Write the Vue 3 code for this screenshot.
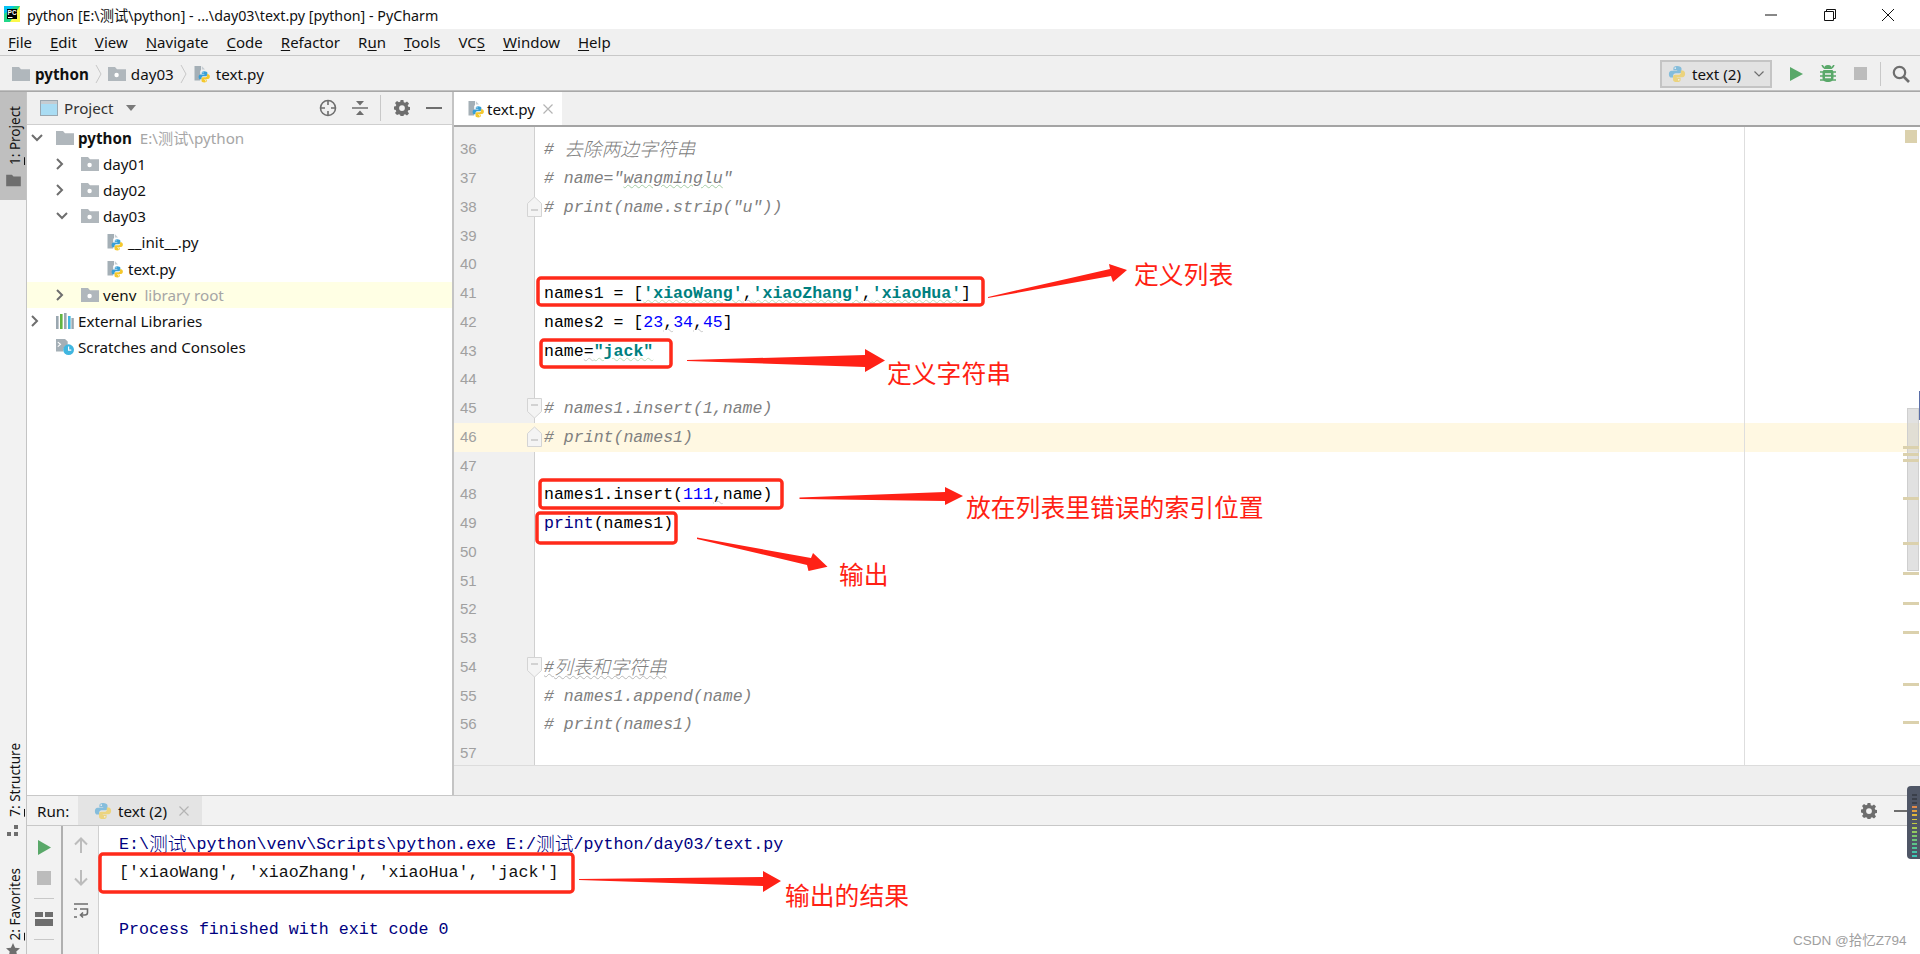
<script setup>
const menu = [['', 'F', 'ile'], ['', 'E', 'dit'], ['', 'V', 'iew'], ['', 'N', 'avigate'], ['', 'C', 'ode'], ['', 'R', 'efactor'], ['R', 'u', 'n'], ['', 'T', 'ools'], ['VC', 'S', ''], ['', 'W', 'indow'], ['', 'H', 'elp']]

const tree = [
  { d: 0, arrow: 'down', icon: 'folder', name: 'python', bold: true, muted: 'E:\\测试\\python' },
  { d: 1, arrow: 'right', icon: 'module', name: 'day01' },
  { d: 1, arrow: 'right', icon: 'module', name: 'day02' },
  { d: 1, arrow: 'down', icon: 'module', name: 'day03' },
  { d: 2, icon: 'filepy', name: '__init__.py' },
  { d: 2, icon: 'filepy', name: 'text.py' },
  { d: 1, arrow: 'right', icon: 'module', name: 'venv', muted: 'library root', hl: true },
  { d: 0, arrow: 'right', icon: 'libs', name: 'External Libraries' },
  { d: 0, icon: 'scratch', name: 'Scratches and Consoles' },
]

const g = (t) => ({ t, c: 'cm' })
const z = (t) => ({ t, c: 'cm zh' })
const s = (t) => ({ t, c: 'str' })
const p = (t) => ({ t })
const q = (t) => ({ t, c: 'sq' })
const b = (t) => ({ t, c: 'num' })
const lines = [
  { n: 36, seg: [g('# '), z('去除两边字符串')] },
  { n: 37, seg: [g('# name="'), { t: 'wangminglu', c: 'cm gw' }, g('"')] },
  { n: 38, fold: 'end', seg: [g('# print(name.strip("u"))')] },
  { n: 39, seg: [] },
  { n: 40, seg: [] },
  { n: 41, seg: [p('names1 = ['), s("'xiaoWang'"), q(','), s("'xiaoZhang'"), q(','), s("'xiaoHua'"), p(']')] },
  { n: 42, seg: [p('names2 = ['), b('23'), q(','), b('34'), q(','), b('45'), p(']')] },
  { n: 43, seg: [p('name'), q('='), s('"jack"')] },
  { n: 44, seg: [] },
  { n: 45, fold: 'start', seg: [g('# names1.insert(1,name)')] },
  { n: 46, fold: 'end', hl: true, seg: [g('# print(names1)')] },
  { n: 47, seg: [] },
  { n: 48, seg: [p('names1.insert('), b('111'), q(','), p('name)')] },
  { n: 49, seg: [{ t: 'print', c: 'kw' }, p('(names1)')] },
  { n: 50, seg: [] },
  { n: 51, seg: [] },
  { n: 52, seg: [] },
  { n: 53, seg: [] },
  { n: 54, fold: 'start', seg: [{ t: '#', c: 'cm wg' }, { t: '列表和字符串', c: 'cm zh wg' }] },
  { n: 55, seg: [g('# names1.append(name)')] },
  { n: 56, seg: [g('# print(names1)')] },
  { n: 57, seg: [] },
]

const markers = [130, 446, 453, 459, 497, 542, 572, 602, 631, 683, 721]

const boxes = [
  { x: 538, y: 278, w: 445, h: 27 },
  { x: 541, y: 340, w: 130, h: 27 },
  { x: 540, y: 480, w: 242, h: 28 },
  { x: 537, y: 513, w: 139, h: 30 },
  { x: 100, y: 854, w: 473, h: 38 },
]
const arrows = [
  '988,297 1110,269 1109,264 1127,270 1113,282 1111,276 988,298',
  '687,360 865,355 865,349 885,360.5 865,372 865,367 687,361',
  '799.5,497.5 945,492 945,487 963,496 945,505 945,501 799.5,499',
  '697,537.5 811,558 813,553 827.5,566.7 808.5,571 807,565 697,539',
  '579,879 763,877 763,871 781,881 763,892 763,886 579,880',
]
const meter = ['#3a3f4a', '#3a3f4a', '#3a3f4a', '#e08a4a', '#e0a040', '#dfb73c', '#d8c83a', '#c4cc42', '#aacb50', '#92c860', '#7cc66c', '#6cc47a', '#5cc488', '#50c498', '#46c4a8', '#3cc8b8']
</script>

<template>
  <div class="app">
    <svg class="defs" width="0" height="0">
      <defs>
        <symbol id="py" viewBox="0 0 16 16">
          <path fill="#389fd6" d="M8 .8C5.6.8 4.8 1.8 4.8 3v1.6H8.2v.6H3.2C1.7 5.2.8 6.4.8 8.2s.9 3 2.3 3h1.5V9.4c0-1.2 1-2.1 2.2-2.1h3.4c1 0 1.8-.8 1.8-1.8V3C11.9 1.8 10.4.8 8 .8z" />
          <path fill="#f4c82d" d="M8 15.2c2.4 0 3.2-1 3.2-2.2v-1.6H7.8v-.6h5c1.5 0 2.4-1.2 2.4-3s-.9-3-2.3-3h-1.5v1.8c0 1.2-1 2.1-2.2 2.1H6.3c-1 0-1.8.8-1.8 1.8V13c0 1.2 1.1 2.2 3.5 2.2z" />
          <circle cx="6.4" cy="2.8" r=".7" fill="#fff" />
          <circle cx="9.6" cy="13.2" r=".7" fill="#fff" />
        </symbol>
        <symbol id="filepy" viewBox="0 0 18 18">
          <path fill="#a4afb6" d="M1.5 1H8v4.5h-.8v10H1.5z" />
          <path fill="#c5ccd1" d="M8.8 1 12 4.6H8.8z" />
          <use href="#py" x="5" y="5.5" width="12.5" height="12.5" />
        </symbol>
        <symbol id="folder" viewBox="0 0 18 16">
          <path fill="#b0b7bc" d="M0 1h7l2 2.2h9V15H0z" />
        </symbol>
        <symbol id="module" viewBox="0 0 18 16">
          <path fill="#b0b7bc" d="M0 1h7l2 2.2h9V15H0z" />
          <circle cx="8.6" cy="9" r="2.2" fill="#fff" />
        </symbol>
        <symbol id="libs" viewBox="0 0 18 16">
          <rect x="0" y="3" width="2.6" height="13" fill="#9aa7b0" />
          <rect x="4" y="1" width="2.6" height="15" fill="#62b543" />
          <rect x="8" y="0" width="2.6" height="16" fill="#9aa7b0" />
          <rect x="12" y="3" width="2.6" height="13" fill="#40b6e0" />
          <rect x="15.4" y="5" width="2.4" height="11" fill="#9aa7b0" />
        </symbol>
        <symbol id="scratch" viewBox="0 0 20 18">
          <path fill="#a4afb6" d="M0 0h10l3 3v4a6 6 0 0 0-5 7H0z" />
          <path fill="none" stroke="#fff" stroke-width="1.2" d="M2 3.5 5 6 2 8.5" />
          <circle cx="14" cy="12" r="6" fill="#40b6e0" />
          <path fill="none" stroke="#fff" stroke-width="1.3" d="M14 8.5V12.4h3" />
        </symbol>
        <symbol id="gear" viewBox="0 0 16 16">
          <path fill="#6e6e6e" fill-rule="evenodd" d="M6.6 0h2.8l.4 2.2 1.3.6L13 1.5l2 2-1.3 1.9.6 1.3 2.2.4v2.8l-2.2.4-.6 1.3 1.3 1.9-2 2-1.9-1.3-1.3.6-.4 2.2H6.6l-.4-2.2-1.3-.6L3 15.1l-2-2 1.3-1.9-.6-1.3L-.5 9.5V6.7l2.2-.4.6-1.3L1 3l2-2 1.9 1.3 1.3-.6zM8 5.2a2.9 2.9 0 1 0 0 5.8 2.9 2.9 0 0 0 0-5.8z" />
        </symbol>
      </defs>
    </svg>

    <header class="title">
      <svg class="pc" width="16" height="16" viewBox="0 0 16 16">
        <rect width="16" height="16" fill="#21d789" />
        <path fill="#fcf84a" d="M16 0v16H6z" />
        <path fill="#07c3f2" d="M0 0h11L0 8z" />
        <rect x="3" y="3" width="10" height="10" fill="#000" />
        <rect x="4" y="11" width="4.5" height="1" fill="#fff" />
        <text x="3.6" y="9" class="pctext">PC</text>
      </svg>
      <span class="title-text">python [E:\测试\python] - ...\day03\text.py [python] - PyCharm</span>
      <div class="winctl">
        <svg width="14" height="14" viewBox="0 0 14 14"><path d="M0 7h12" stroke="#111" stroke-width="1" /></svg>
        <svg width="14" height="14" viewBox="0 0 14 14"><path d="M1.5 3.5h9v9h-9zM3.5 3.5v-2h9v9h-2" fill="none" stroke="#111" /></svg>
        <svg width="14" height="14" viewBox="0 0 14 14"><path d="M1 1l12 12M13 1 1 13" stroke="#111" stroke-width="1" /></svg>
      </div>
    </header>

    <nav class="menu">
      <span v-for="m in menu" :key="m[0] + m[1]">{{ m[0] }}<u>{{ m[1] }}</u>{{ m[2] }}</span>
    </nav>

    <div class="nav">
      <svg width="18" height="16"><use href="#folder" /></svg>
      <b class="crumb-b">python</b>
      <svg class="sep" width="7" height="20" viewBox="0 0 7 20"><path d="M1 1l5 9-5 9" fill="none" stroke="#c8c8c8" /></svg>
      <svg width="18" height="16"><use href="#module" /></svg>
      <span class="crumb">day03</span>
      <svg class="sep" width="7" height="20" viewBox="0 0 7 20"><path d="M1 1l5 9-5 9" fill="none" stroke="#c8c8c8" /></svg>
      <svg width="18" height="18"><use href="#filepy" /></svg>
      <span class="crumb">text.py</span>
      <div class="grow"></div>
      <div class="combo">
        <svg class="washed" width="18" height="18"><use href="#py" /></svg>
        <span>text (2)</span>
        <svg width="10" height="6" viewBox="0 0 10 6"><path d="M.5.5 5 5 9.500.5" fill="none" stroke="#6e6e6e" stroke-width="1.200" /></svg>
      </div>
      <svg class="act play" width="13" height="14" viewBox="0 0 13 14"><path d="M0 0l13 7-13 7z" fill="#59a869" /></svg>
      <svg class="act bug" width="16" height="18" viewBox="0 0 16 18">
        <path fill="#59a869" d="M4 4a4 4 0 0 1 8 0zM3.500 5h9c.800 1 1 2 1 3v5c0 2.500-2.500 4-5.500 4s-5.500-1.500-5.500-4V8c0-1 .2-2 1-3z" />
        <path stroke="#59a869" stroke-width="1.600" d="M0 7h16M0 11h16M0 15h16M2 0l2 3M14 0l-2 3" />
        <path stroke="#f0f0f0" stroke-width="1.300" d="M5 9h6M5 12.500h6" />
      </svg>
      <span class="act stop"></span>
      <span class="vsep"></span>
      <svg class="act search" width="18" height="18" viewBox="0 0 18 18"><circle cx="7.500" cy="7.500" r="5.700" fill="none" stroke="#6e6e6e" stroke-width="2.200" /><path d="M11.500 11.500 17 17" stroke="#6e6e6e" stroke-width="2.600" /></svg>
    </div>

    <div class="body">
      <aside class="stripe">
        <div class="stripe-on">
          <span class="vtext"><u>1</u>: Project</span>
          <svg class="stripe-folder" width="15" height="13" viewBox="0 0 18 16"><path fill="#6e6e6e" d="M0 1h7l2 2.200h9V15H0z" /></svg>
        </div>
        <div class="grow"></div>
        <span class="vtext"><u>7</u>: Structure</span>
        <svg class="stripe-str" width="14" height="14" viewBox="0 0 14 14"><path fill="#6e6e6e" d="M8 1h4v4H8zM1 8h4v4H1zM8 8h4v4H8z" /></svg>
        <span class="vtext fav"><u>2</u>: Favorites</span>
        <svg class="stripe-star" width="14" height="14" viewBox="0 0 14 14"><path fill="#6e6e6e" d="M7 0l2.100 4.700 4.900.5-3.700 3.300L11.400 14 7 11.100 2.600 14l1.100-5.500L0 5.200l4.900-.5z" /></svg>
      </aside>

      <div class="work">
        <div class="top">
          <section class="project">
            <div class="proj-head">
              <svg class="proj-ic" width="18" height="16" viewBox="0 0 18 16"><rect x=".5" y=".5" width="17" height="15" fill="#a9dcf3" stroke="#9aa7b0" /><rect x="1" y="1" width="16" height="3" fill="#c5ccd1" /></svg>
              <span class="proj-name">Project</span>
              <svg class="proj-tri" width="10" height="6" viewBox="0 0 10 6"><path d="M0 0h10L5 6z" fill="#7a7a7a" /></svg>
              <div class="grow"></div>
              <svg class="tool" width="18" height="18" viewBox="0 0 18 18"><circle cx="9" cy="9" r="7.500" fill="none" stroke="#6e6e6e" stroke-width="1.600" /><path d="M9 1v5M9 12v5M1 9h5M12 9h5" stroke="#6e6e6e" stroke-width="1.600" /></svg>
              <svg class="tool" width="16" height="16" viewBox="0 0 16 16"><path d="M0 8h16" stroke="#6e6e6e" stroke-width="1.500" /><path d="M4 1h8L8 5.500zM4 15h8l-4-4.500z" fill="#6e6e6e" /></svg>
              <span class="vsep small"></span>
              <svg class="tool gear" width="16" height="16"><use href="#gear" /></svg>
              <svg class="tool" width="16" height="16" viewBox="0 0 16 16"><path d="M0 8h16" stroke="#6e6e6e" stroke-width="2" /></svg>
            </div>
            <div v-for="r in tree" :key="r.name" class="tree-row" :class="{ hl: r.hl }" :style="{ paddingLeft: 4 + r.d * 25 + 'px' }">
              <span class="arrow">
                <svg v-if="r.arrow === 'down'" width="12" height="8" viewBox="0 0 12 8"><path d="M1 1l5 5 5-5" fill="none" stroke="#6e6e6e" stroke-width="2" /></svg>
                <svg v-else-if="r.arrow === 'right'" width="8" height="12" viewBox="0 0 8 12"><path d="M1 1l5 5-5 5" fill="none" stroke="#6e6e6e" stroke-width="2" /></svg>
              </span>
              <svg class="ti" width="18" height="18"><use :href="'#' + r.icon" /></svg>
              <b v-if="r.bold" class="tn">{{ r.name }}</b>
              <span v-else class="tn">{{ r.name }}</span>
              <span v-if="r.muted" class="tm">{{ r.muted }}</span>
            </div>
          </section>

          <section class="editor">
            <div class="tabs">
              <div class="tab">
                <svg width="18" height="18"><use href="#filepy" /></svg>
                <span class="tab-name">text.py</span>
                <svg class="x" width="10" height="10" viewBox="0 0 10 10"><path d="M.5.5l9 9M9.500.5l-9 9" stroke="#b4b4b4" stroke-width="1.200" /></svg>
              </div>
            </div>
            <div class="code">
              <div v-for="l in lines" :key="l.n" class="line" :class="{ cur: l.hl }">
                <span class="no">{{ l.n }}</span>
                <svg v-if="l.fold" class="fold" width="15" height="22" viewBox="0 0 15 22">
                  <path v-if="l.fold === 'end'" d="M.5 7.500 7.500 1l7 6.500v13H.500z" fill="#f4f4f4" stroke="#d4d4d4" />
                  <path v-else d="M.5 1.500h14v13l-7 6.500-7-6.500z" fill="#f4f4f4" stroke="#d4d4d4" />
                  <path :d="l.fold === 'end' ? 'M4 14h7' : 'M4 8h7'" stroke="#b0b0b0" />
                </svg>
                <span class="src"><span v-for="(x, i) in l.seg" :key="i" :class="x.c">{{ x.t }}</span></span>
              </div>
              <span class="margin"></span>
              <span class="thumb"></span>
              <span class="blue"></span>
            </div>
            <div class="ed-foot"></div>
          </section>
        </div>

        <section class="run">
          <div class="run-bar">
            <span class="run-label">Run:</span>
            <div class="run-tab">
              <svg class="washed" width="18" height="18"><use href="#py" /></svg>
              <span>text (2)</span>
              <svg width="10" height="10" viewBox="0 0 10 10"><path d="M.5.5l9 9M9.500.5l-9 9" stroke="#b4b4b4" stroke-width="1.200" /></svg>
            </div>
            <div class="grow"></div>
            <svg class="run-gear" width="16" height="16"><use href="#gear" /></svg>
            <svg class="run-min" width="16" height="4" viewBox="0 0 16 4"><path d="M0 2h16" stroke="#6e6e6e" stroke-width="2" /></svg>
          </div>
          <div class="run-main">
            <div class="col1">
              <svg width="13" height="15" viewBox="0 0 13 15"><path d="M0 0l13 7.500L0 15z" fill="#59a869" /></svg>
              <span class="stop2"></span>
              <span class="hr"></span>
              <svg width="18" height="14" viewBox="0 0 18 14"><path fill="#6e6e6e" d="M0 0h8v5H0zM10 0h8v5h-8zM0 7h18v7H0z" /></svg>
              <span class="hr"></span>
            </div>
            <div class="col2">
              <svg width="14" height="16" viewBox="0 0 14 16"><path d="M7 16V2M1 7.500 7 1.500l6 6" fill="none" stroke="#bcbcbc" stroke-width="2" /></svg>
              <svg width="14" height="16" viewBox="0 0 14 16"><path d="M7 0v14M1 8.500l6 6 6-6" fill="none" stroke="#bcbcbc" stroke-width="2" /></svg>
              <svg width="16" height="16" viewBox="0 0 16 16"><path d="M1 1h14M7 6h7.500a0 0 0 0 1 0 0v3.500a2.500 2.500 0 0 1-2.500 2.500H8M10 9.500 7.500 12l2.500 2.500M1 6h3M1 14h3" fill="none" stroke="#6e6e6e" stroke-width="1.600" /></svg>
            </div>
            <div class="console">
              <div class="con path first">E:\<span class="zh">测试</span>\python\venv\Scripts\python.exe E:/<span class="zh">测试</span>/python/day03/text.py</div>
              <div class="con out">['xiaoWang', 'xiaoZhang', 'xiaoHua', 'jack']</div>
              <div class="con"></div>
              <div class="con path">Process finished with exit code 0</div>
            </div>
          </div>
        </section>
      </div>
    </div>

    <span v-for="m in markers" :key="m" class="marker" :class="{ big: m === 130 }" :style="{ top: m + 'px' }"></span>

    <svg class="ann" width="1920" height="954">
      <rect v-for="r in boxes" :key="r.x" :x="r.x" :y="r.y" :width="r.w" :height="r.h" rx="3" fill="none" stroke="#ff2a1a" stroke-width="3.500" />
      <polygon v-for="a in arrows" :key="a" :points="a" fill="#ff2116" />
    </svg>
    <span class="lab l1">定义列表</span>
    <span class="lab l2">定义字符串</span>
    <span class="lab l3">放在列表里错误的索引位置</span>
    <span class="lab l4">输出</span>
    <span class="lab l5">输出的结果</span>

    <div class="meter"><i v-for="(c, i) in meter" :key="i" :style="{ background: c }"></i></div>
    <span class="wm">CSDN @拾忆Z794</span>
  </div>
</template>

<style>
html, body { margin: 0; background: #fff; overflow: hidden; }
</style>

<style scoped>
.app { position: relative; width: 1920px; height: 954px; overflow: hidden; display: flex; flex-direction: column; font-family: "Noto Sans", "Noto Sans CJK SC", sans-serif; font-size: 15.2px; color: #111; background: #f0f0f0; }
.defs { position: absolute; }
.grow { flex: 1; }
u { text-decoration-thickness: 1px; text-underline-offset: 2px; }

.title { height: 29px; background: #fff; display: flex; align-items: center; padding-left: 4px; flex: none; }
.pc { flex: none; margin-top: -1px; }
.pctext { font: bold 6.500px "Liberation Sans", sans-serif; fill: #fff; }
.title-text { margin-left: 7px; font-size: 14.280px; white-space: nowrap; }
.winctl { margin-left: auto; display: flex; gap: 44px; padding-right: 25px; }

.menu { height: 26px; flex: none; display: flex; gap: 18px; padding-left: 8px; align-items: center; background: #f0f0f0; border-bottom: 1px solid #c8c8c8; box-sizing: content-box; font-size: 15px; }

.nav { height: 36px; flex: none; display: flex; align-items: center; padding-left: 12px; border-bottom: 1px solid #a8a8a8; box-shadow: inset 0 -1px 0 #c0c0c0; box-sizing: border-box; }
.crumb-b { margin-left: 5px; }
.crumb { margin-left: 5px; }
.sep { margin: 0 6px; }
.combo { width: 112px; height: 28px; box-sizing: border-box; background: #e2e2e2; border: 2px solid #c4c4c4; display: flex; align-items: center; padding: 0 6px; gap: 6px; }
.combo span { flex: 1; }
.washed { opacity: .55; }
.act { flex: none; }
.play { margin-left: 18px; }
.bug { margin-left: 17px; }
.stop { margin-left: 18px; width: 13px; height: 13px; background: #bcbcbc; }
.vsep { width: 1px; height: 24px; background: #c8c8c8; margin: 0 11px 0 13px; flex: none; }
.search { margin-right: 10px; }

.body { flex: 1; display: flex; min-height: 0; }
.stripe { width: 26px; flex: none; border-right: 1px solid #c4c4c4; display: flex; flex-direction: column; align-items: center; background: #f2f2f2; }
.stripe-on { width: 26px; height: 108px; background: #bfbfbf; display: flex; flex-direction: column; align-items: center; padding-top: 14px; box-sizing: border-box; }
.stripe-folder { margin-top: 9px; }
.vtext { writing-mode: vertical-rl; transform: translateX(2px) rotate(180deg); font-size: 13.500px; white-space: nowrap; line-height: 26px; }
.stripe-str { margin-top: 7px; }
.fav { margin-top: 30px; }
.stripe-star { margin-top: 3px; margin-bottom: -3px; }

.work { flex: 1; min-width: 0; display: flex; flex-direction: column; }
.top { height: 703px; flex: none; display: flex; }
.project { width: 427px; flex: none; background: #fff; box-sizing: border-box; border-right: 2px solid #c4c4c4; }
.proj-head { height: 33px; display: flex; align-items: center; background: #f0f0f0; border-bottom: 1px solid #cfcfcf; box-sizing: border-box; padding-left: 13px; }
.proj-name { margin-left: 6px; color: #333; }
.proj-tri { margin-left: 12px; }
.tool { flex: none; margin-right: 15px; }
.tool.gear { margin-right: 16px; }
.vsep.small { height: 26px; margin: 0 13px 0 -3px; }
.tool:last-child { margin-right: 10px; }
.tree-row { height: 26.100px; display: flex; align-items: center; box-sizing: border-box; line-height: 20px; }
.tree-row.hl { background: #ffffe4; }
.arrow { width: 25px; flex: none; display: flex; align-items: center; justify-content: flex-start; }
.ti { flex: none; }
.tn { margin-left: 4px; white-space: nowrap; }
.tm { margin-left: 8px; color: #a6a6a6; white-space: nowrap; }

.editor { flex: 1; min-width: 0; display: flex; flex-direction: column; }
.tabs { height: 35px; flex: none; display: flex; background: #f0f0f0; border-bottom: 2px solid #a4a4a4; box-sizing: border-box; }
.tab { width: 108px; height: 33px; background: #fff; display: flex; align-items: center; padding-left: 13px; box-sizing: border-box; }
.tab-name { margin-left: 2px; width: 56px; }
.x { flex: none; }
.code { position: relative; height: 638px; overflow: hidden; padding-top: 8.400px; box-sizing: border-box; background: linear-gradient(90deg, #f0f0f0 80px, #d0d0d0 80px, #d0d0d0 81.500px, #fff 81.500px); }
.line { position: relative; height: 28.750px; line-height: 28.750px; display: flex; align-items: center; font-family: "Liberation Mono", "Noto Sans CJK SC", monospace; font-size: 16.560px; white-space: pre; }
.line.cur { background: #fff8e2; }
.no { width: 90px; flex: none; padding-left: 6px; box-sizing: border-box; color: #a0a0a0; font-family: "Liberation Sans", sans-serif; font-size: 15px; }
.fold { position: absolute; left: 73px; top: 3px; }
.src { color: #000; padding-top: 2px; }
.cm { color: #808080; font-style: italic; }
.zh { position: relative; top: 2px; font-family: "Noto Sans CJK SC", sans-serif; font-size: 18.800px; font-weight: 300; line-height: 0; }
.gw { text-decoration: underline wavy #a6cda6 1px; }
.wg { text-decoration: underline wavy #b8b8b8 1px; }
.str { color: #008080; font-weight: bold; text-decoration: underline wavy #bcdcbc 1px; }
.sq { text-decoration: underline wavy #c8c8c8 1px; }
.num { color: #0000ff; }
.kw { color: #000080; }
.margin { position: absolute; left: 1290px; top: 0; bottom: 0; width: 1px; background: #dedede; }
.thumb { position: absolute; left: 1453px; width: 12px; top: 281px; height: 163px; box-sizing: border-box; background: rgba(200, 200, 200, .55); border: 1px solid #cfcfcf; }
.blue { position: absolute; left: 1465px; top: 264px; width: 1px; height: 29px; background: #5b6fa8; }
.ed-foot { flex: 1; background: #efefef; border-top: 1px solid #dcdcdc; }

.run { flex: 1; min-height: 0; display: flex; flex-direction: column; background: #f2f2f2; }
.run-bar { height: 31px; flex: none; display: flex; align-items: center; box-sizing: border-box; border-top: 1px solid #c8c8c8; border-bottom: 1px solid #c8c8c8; padding-left: 10px; }
.run-label { width: 41px; }
.run-tab { width: 124px; height: 100%; background: #e4e4e4; display: flex; align-items: center; padding-left: 16px; box-sizing: border-box; gap: 6px; }
.run-tab span { width: 55px; }
.run-gear { margin-right: 17px; }
.run-min { margin-right: 10px; }
.run-main { flex: 1; display: flex; min-height: 0; }
.col1 { width: 36px; flex: none; box-sizing: border-box; border-right: 2px solid #b0b0b0; display: flex; flex-direction: column; align-items: center; padding-top: 14px; }
.stop2 { width: 14px; height: 14px; background: #bcbcbc; margin-top: 16px; flex: none; }
.hr { width: 20px; height: 1px; background: #c8c8c8; margin: 13px 0; flex: none; }
.col2 { width: 36px; flex: none; box-sizing: border-box; border-right: 1px solid #d0d0d0; display: flex; flex-direction: column; align-items: center; padding-top: 11px; gap: 17px; }
.console { flex: 1; background: #fff; padding: 4.500px 0 0 20px; font-family: "Liberation Mono", "Noto Sans CJK SC", monospace; font-size: 16.650px; }
.con { height: 28.500px; line-height: 28.500px; white-space: pre; }
.path { color: #000080; }
.out { color: #111; }

.marker { position: absolute; left: 1903px; width: 16px; height: 3px; background: #dbd1ad; }
.marker.big { left: 1905px; width: 12px; height: 13px; }
.ann { position: absolute; left: 0; top: 0; pointer-events: none; }
.lab { position: absolute; font-family: "Noto Sans CJK SC", sans-serif; color: #ff1f14; font-size: 24.800px; line-height: 30px; white-space: nowrap; }
.l1 { left: 1134px; top: 258px; }
.l2 { left: 887px; top: 357px; }
.l3 { left: 966px; top: 491px; }
.l4 { left: 839px; top: 558px; }
.l5 { left: 785px; top: 879px; }
.meter { position: absolute; left: 1907px; top: 786px; width: 14px; height: 73px; background: #4f5666; border-radius: 4px 0 0 4px; display: flex; flex-direction: column; padding: 8px 0 0 5px; gap: 2.300px; box-sizing: border-box; }
.meter i { display: block; width: 5px; height: 1.800px; }
.wm { position: absolute; left: 1793px; top: 929px; font-family: "Liberation Sans", "Noto Sans CJK SC", sans-serif; font-size: 13.500px; color: #a0a0a0; white-space: nowrap; }
</style>
